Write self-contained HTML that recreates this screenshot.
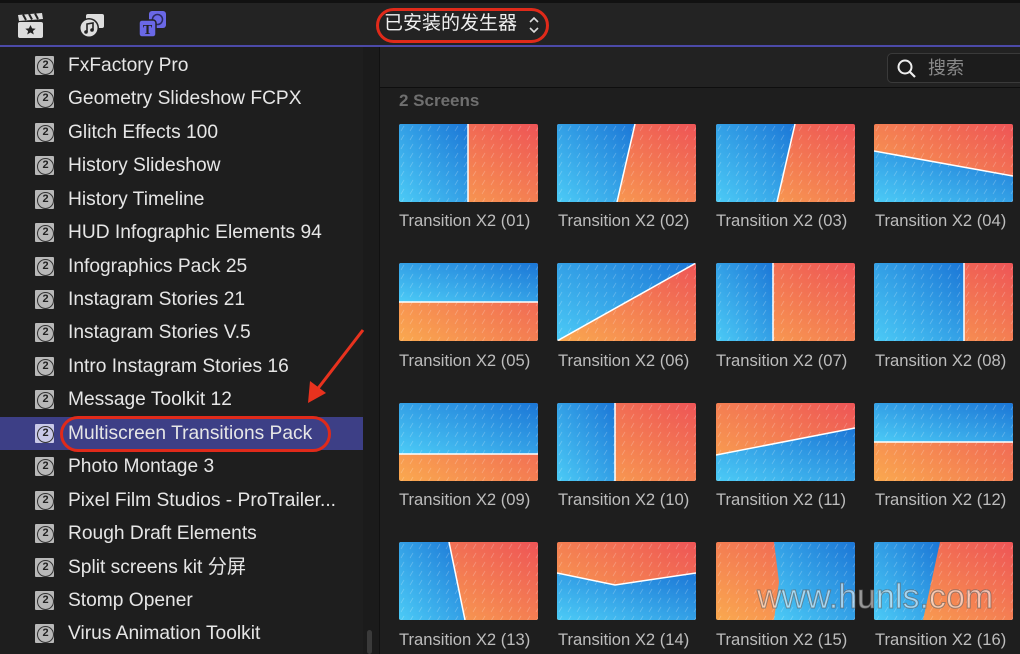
<!DOCTYPE html>
<html><head><meta charset="utf-8"><style>
*{margin:0;padding:0;box-sizing:border-box}
body{width:1020px;height:654px;overflow:hidden;background:#1e1e1e;font-family:"Liberation Sans","Noto Sans CJK SC",sans-serif;position:relative}
.top{position:absolute;left:0;top:0;width:1020px;height:45px;background:#232323;border-top:3px solid #111}
.pl{position:absolute;left:0;top:45px;width:1020px;height:2px;background:#4c4aa8}
.side{position:absolute;left:0;top:47px;width:363px;height:607px;background:#1e1e1e}
.gut{position:absolute;left:363px;top:47px;width:17px;height:607px;background:#1b1b1b;border-right:1px solid #111}
.row{position:absolute;left:0;width:363px;height:33px;color:#e6e6e6;font-size:19.2px;line-height:33px}
.row .ic{position:absolute;left:35px;top:7px;width:19px;height:19px;background:#b8b8b8;border-radius:1px}
.row .ic:after{content:"2";position:absolute;left:2px;top:2px;width:15px;height:15px;border:1.5px solid #333;border-radius:50%;font-size:11px;line-height:12px;text-align:center;color:#222;font-weight:bold;font-style:normal}
.row span{position:absolute;left:68px;top:0}
.sel{background:#3d3f86}
.sel .ic{background:#c9c9e8}
.main{position:absolute;left:380px;top:47px;width:640px;height:607px;background:#1e1e1e}
.sbar{position:absolute;left:380px;top:47px;width:640px;height:41px;background:#222;border-bottom:1px solid #0e0e0e}
.search{position:absolute;left:887px;top:53px;width:140px;height:30px;background:#1c1c1c;border:1px solid #3a3a3a;border-radius:5px;color:#8a8a8a;font-size:18px;line-height:28px;padding-left:40px}
.hd{position:absolute;left:399px;top:91px;color:#6f6f6f;font-size:17px;font-weight:bold}
.t{position:absolute;width:139px;height:78px}
.t svg{display:block;border-radius:2px}
.lb{position:absolute;color:#bdbdbd;font-size:16.6px;white-space:nowrap}
.pill{position:absolute;border:3px solid #e02a1a;border-radius:18px}
.wm{position:absolute;left:757px;top:578px;font-size:34px;color:rgba(255,255,255,.55);-webkit-text-stroke:1px rgba(90,90,90,.6)}
</style></head><body>
<svg width="0" height="0" style="position:absolute">
<defs>
<linearGradient id="b" x1="0" y1="1" x2="1" y2="0"><stop offset="0" stop-color="#4ccbf6"/><stop offset="1" stop-color="#1b76d6"/></linearGradient>
<linearGradient id="o" x1="0" y1="1" x2="1" y2="0"><stop offset="0" stop-color="#faa94f"/><stop offset="1" stop-color="#ee5456"/></linearGradient>
<pattern id="h" width="9" height="9" patternUnits="userSpaceOnUse"><path d="M2 7 L5 2" stroke="#fff" stroke-opacity=".22" stroke-width=".8"/></pattern>
</defs></svg>
<div class="top"></div>
<svg style="position:absolute;left:17px;top:12px" width="28" height="27" viewBox="0 0 28 27"><rect x="1" y="10" width="25" height="16" rx="2" fill="#ddd"/><path d="M1 3 L25 1 L26 7 L2 9Z" fill="#ddd"/><path d="M6 2.5 L9 8 M12 2 L15 7.5 M18 1.5 L21 7" stroke="#232323" stroke-width="2"/><path d="M13.5 13 l1.6 3.4 3.6.3-2.8 2.3.9 3.5-3.3-2-3.3 2 .9-3.5-2.8-2.3 3.6-.3z" fill="#222"/></svg>
<svg style="position:absolute;left:78px;top:11px" width="28" height="28" viewBox="0 0 28 28"><rect x="8" y="3" width="18" height="14" rx="2" fill="#ddd"/><circle cx="11" cy="17" r="10" fill="#232323"/><circle cx="11" cy="17" r="8.5" fill="#ddd"/><path d="M9 21 V13 L15 12 V19" stroke="#222" stroke-width="1.6" fill="none"/><circle cx="8" cy="21" r="1.8" fill="#222"/><circle cx="14" cy="19" r="1.8" fill="#222"/></svg>
<svg style="position:absolute;left:138px;top:10px" width="30" height="30" viewBox="0 0 30 30"><rect x="11" y="1" width="17" height="17" rx="3" fill="#6a68e6"/><circle cx="19.5" cy="9.5" r="5" fill="none" stroke="#2a2a60" stroke-width="1.5"/><rect x="1" y="10" width="17" height="17" rx="3" fill="#6a68e6" stroke="#232323" stroke-width="1.5"/><text x="9.5" y="24" font-size="14" font-weight="bold" text-anchor="middle" fill="#222" font-family="Liberation Serif">T</text></svg>
<div style="position:absolute;left:384px;top:11px;color:#f0f0f0;font-size:19px;line-height:26px">已安装的发生器</div>
<svg style="position:absolute;left:528px;top:15px" width="12" height="20" viewBox="0 0 12 20"><path d="M2 7 L6 3 L10 7 M2 13 L6 17 L10 13" stroke="#ddd" stroke-width="1.6" fill="none"/></svg>
<div class="pill" style="left:376px;top:8px;width:173px;height:35px"></div>
<div class="pl"></div>
<div class="side"></div><div class="gut"></div>
<div class="row" style="top:49px"><i class="ic"></i><span>FxFactory Pro</span></div>
<div class="row" style="top:82px"><i class="ic"></i><span>Geometry Slideshow FCPX</span></div>
<div class="row" style="top:116px"><i class="ic"></i><span>Glitch Effects 100</span></div>
<div class="row" style="top:149px"><i class="ic"></i><span>History Slideshow</span></div>
<div class="row" style="top:183px"><i class="ic"></i><span>History Timeline</span></div>
<div class="row" style="top:216px"><i class="ic"></i><span>HUD Infographic Elements 94</span></div>
<div class="row" style="top:250px"><i class="ic"></i><span>Infographics Pack 25</span></div>
<div class="row" style="top:283px"><i class="ic"></i><span>Instagram Stories 21</span></div>
<div class="row" style="top:316px"><i class="ic"></i><span>Instagram Stories V.5</span></div>
<div class="row" style="top:350px"><i class="ic"></i><span>Intro Instagram Stories 16</span></div>
<div class="row" style="top:383px"><i class="ic"></i><span>Message Toolkit 12</span></div>
<div class="row sel" style="top:417px"><i class="ic"></i><span>Multiscreen Transitions Pack</span></div>
<div class="row" style="top:450px"><i class="ic"></i><span>Photo Montage 3</span></div>
<div class="row" style="top:484px"><i class="ic"></i><span>Pixel Film Studios - ProTrailer...</span></div>
<div class="row" style="top:517px"><i class="ic"></i><span>Rough Draft Elements</span></div>
<div class="row" style="top:551px"><i class="ic"></i><span>Split screens kit 分屏</span></div>
<div class="row" style="top:584px"><i class="ic"></i><span>Stomp Opener</span></div>
<div class="row" style="top:617px"><i class="ic"></i><span>Virus Animation Toolkit</span></div>
<div class="pill" style="left:60px;top:416px;width:271px;height:36px"></div>
<div style="position:absolute;left:367px;top:630px;width:5px;height:24px;background:#3a3a3a;border-radius:3px"></div>
<svg style="position:absolute;left:300px;top:325px" width="70" height="85"><path d="M63 5 L16 66" stroke="#e8321e" stroke-width="3"/><path d="M8 78 L10 56 L26 68Z" fill="#e8321e"/></svg>
<div class="main"></div>
<div class="sbar"></div>
<div class="search">搜索</div>
<svg style="position:absolute;left:896px;top:58px" width="22" height="22" viewBox="0 0 22 22"><circle cx="9" cy="9" r="6.5" stroke="#eee" stroke-width="2" fill="none"/><path d="M13.5 13.5 L19 19" stroke="#eee" stroke-width="2.2"/></svg>
<div class="hd">2 Screens</div>

<div class="t" style="left:399px;top:124px"><svg width="139" height="78"><rect width="139" height="78" fill="url(#o)"/><path d="M0 0H69V78H0Z" fill="url(#b)"/><rect width="139" height="78" fill="url(#h)"/><path d="M69 0V78" stroke="#fff" stroke-width="1.5"/></svg></div>
<div class="t" style="left:557px;top:124px"><svg width="139" height="78"><rect width="139" height="78" fill="url(#o)"/><path d="M0 0H78L60 78H0Z" fill="url(#b)"/><rect width="139" height="78" fill="url(#h)"/><path d="M78 0L60 78" stroke="#fff" stroke-width="1.5"/></svg></div>
<div class="t" style="left:716px;top:124px"><svg width="139" height="78"><rect width="139" height="78" fill="url(#o)"/><path d="M0 0H79L61 78H0Z" fill="url(#b)"/><rect width="139" height="78" fill="url(#h)"/><path d="M79 0L61 78" stroke="#fff" stroke-width="1.5"/></svg></div>
<div class="t" style="left:874px;top:124px"><svg width="139" height="78"><rect width="139" height="78" fill="url(#o)"/><path d="M0 27L139 52V78H0Z" fill="url(#b)"/><rect width="139" height="78" fill="url(#h)"/><path d="M0 27L139 52" stroke="#fff" stroke-width="1.5"/></svg></div>
<div class="lb" style="left:399px;top:211px">Transition X2 (01)</div>
<div class="lb" style="left:558px;top:211px">Transition X2 (02)</div>
<div class="lb" style="left:716px;top:211px">Transition X2 (03)</div>
<div class="lb" style="left:875px;top:211px">Transition X2 (04)</div>

<div class="t" style="left:399px;top:263px"><svg width="139" height="78"><rect width="139" height="78" fill="url(#o)"/><path d="M0 0H139V39H0Z" fill="url(#b)"/><rect width="139" height="78" fill="url(#h)"/><path d="M0 39H139" stroke="#fff" stroke-width="1.5"/></svg></div>
<div class="t" style="left:557px;top:263px"><svg width="139" height="78"><rect width="139" height="78" fill="url(#o)"/><path d="M0 0H139L0 78Z" fill="url(#b)"/><rect width="139" height="78" fill="url(#h)"/><path d="M139 0L0 78" stroke="#fff" stroke-width="1.5"/></svg></div>
<div class="t" style="left:716px;top:263px"><svg width="139" height="78"><rect width="139" height="78" fill="url(#o)"/><path d="M0 0H57V78H0Z" fill="url(#b)"/><rect width="139" height="78" fill="url(#h)"/><path d="M57 0V78" stroke="#fff" stroke-width="1.5"/></svg></div>
<div class="t" style="left:874px;top:263px"><svg width="139" height="78"><rect width="139" height="78" fill="url(#o)"/><path d="M0 0H90V78H0Z" fill="url(#b)"/><rect width="139" height="78" fill="url(#h)"/><path d="M90 0V78" stroke="#fff" stroke-width="1.5"/></svg></div>
<div class="lb" style="left:399px;top:351px">Transition X2 (05)</div>
<div class="lb" style="left:558px;top:351px">Transition X2 (06)</div>
<div class="lb" style="left:716px;top:351px">Transition X2 (07)</div>
<div class="lb" style="left:875px;top:351px">Transition X2 (08)</div>

<div class="t" style="left:399px;top:403px"><svg width="139" height="78"><rect width="139" height="78" fill="url(#o)"/><path d="M0 0H139V51H0Z" fill="url(#b)"/><rect width="139" height="78" fill="url(#h)"/><path d="M0 51H139" stroke="#fff" stroke-width="1.5"/></svg></div>
<div class="t" style="left:557px;top:403px"><svg width="139" height="78"><rect width="139" height="78" fill="url(#o)"/><path d="M0 0H58V78H0Z" fill="url(#b)"/><rect width="139" height="78" fill="url(#h)"/><path d="M58 0V78" stroke="#fff" stroke-width="1.5"/></svg></div>
<div class="t" style="left:716px;top:403px"><svg width="139" height="78"><rect width="139" height="78" fill="url(#o)"/><path d="M0 52L139 25V78H0Z" fill="url(#b)"/><rect width="139" height="78" fill="url(#h)"/><path d="M0 52L139 25" stroke="#fff" stroke-width="1.5"/></svg></div>
<div class="t" style="left:874px;top:403px"><svg width="139" height="78"><rect width="139" height="78" fill="url(#o)"/><path d="M0 0H139V39H0Z" fill="url(#b)"/><rect width="139" height="78" fill="url(#h)"/><path d="M0 39H139" stroke="#fff" stroke-width="1.5"/></svg></div>
<div class="lb" style="left:399px;top:490px">Transition X2 (09)</div>
<div class="lb" style="left:558px;top:490px">Transition X2 (10)</div>
<div class="lb" style="left:716px;top:490px">Transition X2 (11)</div>
<div class="lb" style="left:875px;top:490px">Transition X2 (12)</div>

<div class="t" style="left:399px;top:542px"><svg width="139" height="78"><rect width="139" height="78" fill="url(#o)"/><path d="M0 0H50L66 78H0Z" fill="url(#b)"/><rect width="139" height="78" fill="url(#h)"/><path d="M50 0L66 78" stroke="#fff" stroke-width="1.5"/></svg></div>
<div class="t" style="left:557px;top:542px"><svg width="139" height="78"><rect width="139" height="78" fill="url(#o)"/><path d="M0 31L58 43L139 31V78H0Z" fill="url(#b)"/><rect width="139" height="78" fill="url(#h)"/><path d="M0 31L58 43L139 31" stroke="#fff" stroke-width="1.5" fill="none"/></svg></div>
<div class="t" style="left:716px;top:542px"><svg width="139" height="78"><rect width="139" height="78" fill="url(#o)"/><path d="M58 0L63 40L58 78H139V0Z" fill="url(#b)"/><rect width="139" height="78" fill="url(#h)"/></svg></div>
<div class="t" style="left:874px;top:542px"><svg width="139" height="78"><rect width="139" height="78" fill="url(#o)"/><path d="M0 0H66L49 78H0Z" fill="url(#b)"/><rect width="139" height="78" fill="url(#h)"/></svg></div>
<div class="lb" style="left:399px;top:630px">Transition X2 (13)</div>
<div class="lb" style="left:558px;top:630px">Transition X2 (14)</div>
<div class="lb" style="left:716px;top:630px">Transition X2 (15)</div>
<div class="lb" style="left:875px;top:630px">Transition X2 (16)</div>
<div class="wm">www.hunls.com</div>
</body></html>
